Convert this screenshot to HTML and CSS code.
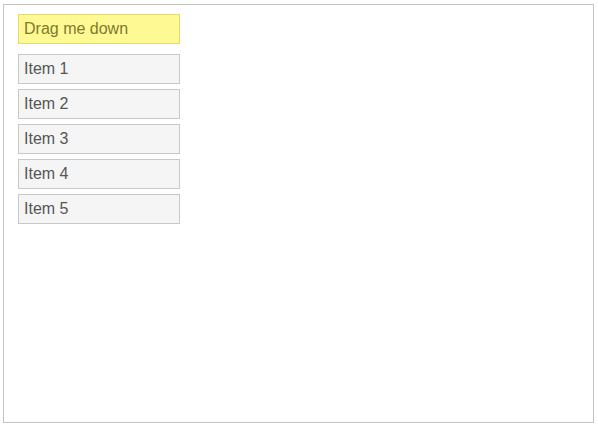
FILE: index.html
```html
<!DOCTYPE html>
<html>
<head>
<meta charset="utf-8">
<link rel="stylesheet" href="styles.css">
</head>
<body>
<div class="frame">
  <div class="handle">Drag me down</div>
  <ul class="list">
    <li class="item">Item 1</li>
    <li class="item">Item 2</li>
    <li class="item">Item 3</li>
    <li class="item">Item 4</li>
    <li class="item">Item 5</li>
  </ul>
</div>
</body>
</html>
```
FILE: styles.css
```css
html, body {
  margin: 0;
  padding: 0;
  background: #fff;
}
body {
  padding: 4px 0 0 3px;
  font-family: "Liberation Sans", Arial, sans-serif;
  font-size: 16px;
}
.frame {
  box-sizing: border-box;
  width: 591px;
  height: 419px;
  border: 1px solid #c3c3c3;
  padding: 9px 0 0 14px;
}
.handle {
  box-sizing: border-box;
  width: 162px;
  height: 30px;
  padding: 4px 5px 0;
  line-height: 20px;
  background: #fff994;
  border: 1px solid #e3db6c;
  color: #7d7a2e;
}
.list {
  list-style: none;
  margin: 10px 0 0;
  padding: 0;
  display: flex;
  flex-direction: column;
  gap: 5px;
}
.item {
  box-sizing: border-box;
  width: 162px;
  height: 30px;
  padding: 4px 5px 0;
  line-height: 20px;
  background: #f5f5f5;
  border: 1px solid #c8c8c8;
  color: #555;
}
```
